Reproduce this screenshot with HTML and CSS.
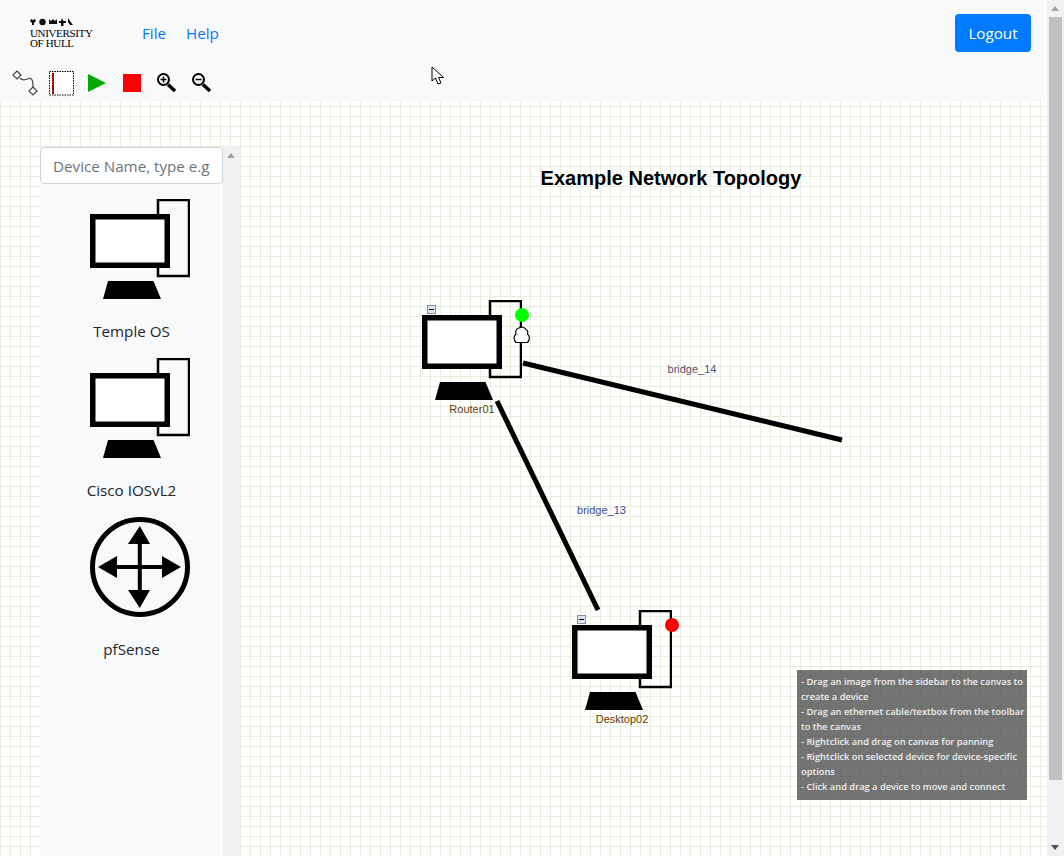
FILE: index.html
```html
<!DOCTYPE html>
<html lang="en">
<head>
    <meta charset="UTF-8">
    <meta name="viewport" content="width=device-width, initial-scale=1.0">
    <title>Network Topology</title>
    <link rel="stylesheet" href="styles.css">
</head>
<body>

    <svg class="defs" width="0" height="0">
        <symbol id="icon-pc" viewBox="0 0 100 100">
            <rect x="68" y="1" width="31" height="76" fill="none" stroke="#000" stroke-width="2.500"/>
            <rect x="2.750" y="17.750" width="74.500" height="48.500" fill="#fff" stroke="#000" stroke-width="5.500"/>
            <path d="M18 82H63.500L71 100H13Z" fill="#000"/>
        </symbol>
        <symbol id="icon-router" viewBox="0 0 100 100">
            <circle cx="50" cy="50" r="47.500" fill="none" stroke="#000" stroke-width="5"/>
            <path d="M47.800 25H51.800V48H72V39L91 50L72 61V52H51.800V73H60L49.800 91L38 73H47.800V52H27V61L8 50L27 39V48H47.800Z" fill="#000"/>
            <path d="M49.800 9L60 27H38Z" fill="#000"/>
        </symbol>
    </svg>

    <div class="app">
        <div class="page">
            <header class="topbar">
                <nav class="navbar">
                    <a class="logo" href="#">
                        <svg class="crests" width="44" height="8" viewBox="0 0 44 8">
                            <path d="M1 1L3 2L5 1L6 3L4 5V7H2V5L0 3Z"/>
                            <circle cx="12.500" cy="4" r="3.200"/>
                            <path d="M19 1L21 3L23 1L25 3L27 1V6H19Z"/>
                            <path d="M32 0L33.500 3H36V5H33.500V8H31V5H29V3H31Z"/>
                            <path d="M38 0L40 3L43 7H40L38 4Z"/>
                        </svg>
                        <span class="logo-text">UNIVERSITY<br>OF HULL</span>
                    </a>
                    <ul class="nav-links">
                        <li><a href="#">File</a></li>
                        <li><a href="#">Help</a></li>
                    </ul>
                    <button class="logout" type="button">Logout</button>
                </nav>
                <div class="toolbar">
                    <svg width="220" height="32" viewBox="0 0 220 32">
                        <g fill="#fff" stroke="#444" stroke-width="1.200">
                            <path d="M17 4L21 8L17 12L13 8Z"/>
                            <path d="M33 20L37 24L33 28L29 24Z"/>
                            <path d="M20 11C23 14.500 26 12.500 29 11.500C32 11 33 13 33 20" fill="none"/>
                        </g>
                        <rect x="49.500" y="4.500" width="24" height="23.500" fill="#fff" stroke="#000" stroke-dasharray="1.500 1"/>
                        <rect x="52" y="6" width="1" height="21" fill="#a01010"/>
                        <rect x="53" y="6" width="1" height="21" fill="#303070"/>
                        <path d="M88 7L106 16L88 25Z" fill="#00a800"/>
                        <rect x="123" y="7" width="18" height="18" fill="#f00"/>
                        <g fill="none" stroke="#000">
                            <circle cx="163.500" cy="12.500" r="5.500" stroke-width="2"/>
                            <path d="M168 17.500L175 24" stroke-width="3.500"/>
                            <path d="M160.500 12.500H166.500M163.500 9.500V15.500" stroke-width="1.500"/>
                            <circle cx="198.500" cy="12.500" r="5.500" stroke-width="2"/>
                            <path d="M203 17.500L210 24" stroke-width="3.500"/>
                            <path d="M195.500 12.500H201.500" stroke-width="1.500"/>
                        </g>
                    </svg>
                </div>
            </header>

            <main class="workspace">
                <svg class="canvas" viewBox="0 102 1047 754">
                    <text class="title" x="671" y="185">Example Network Topology</text>

                    <path class="link" d="M523 363L842 440"/>
                    <path class="link" d="M497 401L598 610"/>
                    <text class="link-label label-14" x="692" y="373">bridge_14</text>
                    <text class="link-label label-13" x="601.500" y="514">bridge_13</text>

                    <use href="#icon-pc" x="422" y="300" width="100" height="100"/>
                    <rect class="collapse" x="427.500" y="305.500" width="8" height="8"/>
                    <path class="collapse-bar" d="M429 309.500H434"/>
                    <circle cx="522" cy="315" r="7" fill="#0f0"/>
                    <path class="cloud" d="M519 328C521 326.500 525 327 526 329.500C527.500 330 528 332 527.500 334C530 336 530 340 527.500 342.500H516C513.500 340 513.500 336 516 334C515 331 516.500 328.500 519 328Z"/>
                    <text class="node-label" x="472" y="413">Router01</text>

                    <use href="#icon-pc" x="572" y="610" width="100" height="100"/>
                    <rect class="collapse" x="577.500" y="615.500" width="8" height="8"/>
                    <path class="collapse-bar" d="M579 619.500H584"/>
                    <circle cx="672" cy="625" r="7" fill="#f00"/>
                    <text class="node-label" x="622" y="723">Desktop02</text>
                </svg>

                <aside class="sidebar">
                    <div class="sidebar-list">
                        <input class="device-search" type="text" placeholder="Device Name, type e.g. Cisco">
                        <div class="device">
                            <svg class="device-icon"><use href="#icon-pc"/></svg>
                            <p class="device-name">Temple OS</p>
                        </div>
                        <div class="device">
                            <svg class="device-icon"><use href="#icon-pc"/></svg>
                            <p class="device-name">Cisco IOSvL2</p>
                        </div>
                        <div class="device">
                            <svg class="device-icon"><use href="#icon-router"/></svg>
                            <p class="device-name">pfSense</p>
                        </div>
                    </div>
                    <div class="scrollbar sidebar-scroll">
                        <span class="arrow-up"></span>
                    </div>
                </aside>

                <div class="help-box">
                    - Drag an image from the sidebar to the canvas to create a device<br>
                    - Drag an ethernet cable/textbox from the toolbar to the canvas<br>
                    - Rightclick and drag on canvas for panning<br>
                    - Rightclick on selected device for device-specific options<br>
                    - Click and drag a device to move and connect
                </div>
            </main>
        </div>

        <div class="scrollbar page-scroll">
            <span class="arrow-up"></span>
            <div class="thumb"></div>
            <span class="arrow-down"></span>
        </div>
    </div>

    <svg class="cursor" width="14" height="20" viewBox="0 0 14 20">
        <path d="M1 1V15L4.500 12L7 18L10 17L7.500 11.500H12.500Z" fill="#fff" stroke="#000"/>
    </svg>

</body>
</html>
```

FILE: styles.css
```css
* {
    box-sizing: border-box;
}
html, body {
    height: 100%;
    margin: 0;
    overflow: hidden;
}
body {
    font-family: "Open Sans", "Liberation Sans", sans-serif;
    font-size: 15.200px;
    color: #212529;
    position: relative;
}
.defs {
    position: absolute;
}
.app {
    display: flex;
    height: 100%;
}
.page {
    flex: 1;
    display: flex;
    flex-direction: column;
    min-width: 0;
}

/* top bar */
.topbar {
    background-color: #f8f9fb;
    height: 102px;
}
.navbar {
    display: flex;
    align-items: center;
    height: 66px;
    padding: 0 16px 0 30px;
}
.logo {
    display: flex;
    flex-direction: column;
    gap: 2px;
    width: 112px;
    color: #000;
    text-decoration: none;
}
.crests {
    fill: #111;
}
.logo-text {
    font-family: "Liberation Serif", serif;
    font-size: 11px;
    line-height: 10px;
    letter-spacing: -0.350px;
}
.nav-links {
    display: flex;
    gap: 20px;
    list-style: none;
    margin: 0;
    padding: 0;
    flex: 1;
}
.nav-links a {
    color: #007bff;
    text-decoration: none;
}
.logout {
    width: 76px;
    height: 38px;
    padding: 0;
    font-family: inherit;
    font-size: 15.200px;
    color: #fff;
    background-color: #007bff;
    border: none;
    border-radius: 4px;
}
.toolbar {
    height: 36px;
    line-height: 0;
}
.toolbar svg {
    margin-top: 1px;
}

/* canvas */
.workspace {
    flex: 1;
    position: relative;
    padding: 45px 0 0 40px;
    overflow: hidden;
    background-color: #fff;
    background-image:
        linear-gradient(to right, #e8eedd 1px, transparent 1px),
        linear-gradient(to bottom, #e8eedd 1px, transparent 1px);
    background-size: 10px 10px;
    background-position: 0 4px;
}
.canvas {
    position: absolute;
    left: 0;
    top: 0;
    width: 1047px;
    height: 754px;
}
.title {
    font-family: "Liberation Sans", Arial, sans-serif;
    font-size: 20px;
    font-weight: bold;
    text-anchor: middle;
    fill: #000;
}
.link {
    fill: none;
    stroke: #000;
    stroke-width: 5;
}
.link-label {
    font-family: "Liberation Sans", Arial, sans-serif;
    font-size: 11px;
    text-anchor: middle;
}
.label-14 {
    fill: #505070;
}
.label-13 {
    fill: #404890;
}
.node-label {
    font-family: "Liberation Sans", Arial, sans-serif;
    font-size: 11px;
    text-anchor: middle;
    fill: #663d00;
}
.collapse {
    fill: #dfe6ee;
    stroke: #7f93a8;
}
.collapse-bar {
    stroke: #000;
    fill: none;
}
.cloud {
    fill: #fff;
    stroke: #000;
    stroke-width: 1.200;
}

/* sidebar */
.sidebar {
    position: relative;
    display: flex;
    width: 200px;
    height: 100%;
}
.sidebar-list {
    width: 183px;
    background-color: #f8f9fb;
}
.device-search {
    display: block;
    width: 100%;
    height: 37px;
    padding: 6px 12px;
    font-family: inherit;
    font-size: 15.200px;
    background-color: #fff;
    border: 1px solid #ced4da;
    border-radius: 4px;
}
.device-search::placeholder {
    color: #6c757d;
}
.device {
    display: flex;
    flex-direction: column;
    align-items: center;
    margin-top: 15px;
}
.device-icon {
    display: block;
    width: 100px;
    height: 100px;
    margin-left: 16px;
}
.device-name {
    margin: 20px 0 0;
    line-height: 24px;
}

/* scrollbars */
.scrollbar {
    position: relative;
    width: 17px;
    background-color: #f1f1f1;
}
.arrow-up, .arrow-down {
    position: absolute;
    left: 4px;
    width: 0;
    height: 0;
    border-left: 4.500px solid transparent;
    border-right: 4.500px solid transparent;
}
.arrow-up {
    top: 6px;
    border-bottom: 5px solid #a3a3a3;
}
.arrow-down {
    bottom: 6px;
    border-top: 5px solid #505050;
}
.page-scroll {
    flex-shrink: 0;
}
.thumb {
    position: absolute;
    left: 2px;
    top: 17px;
    width: 13px;
    height: 763px;
    background-color: #c1c1c1;
}

/* overlays */
.help-box {
    position: absolute;
    left: 797px;
    top: 568px;
    width: 230px;
    height: 130px;
    padding: 4px 2px 4px 4px;
    font-size: 9.300px;
    font-weight: 600;
    line-height: 15px;
    color: #f0f0f0;
    background-color: rgba(70, 70, 70, 0.75);
}
.cursor {
    position: absolute;
    left: 431px;
    top: 66px;
}
```
